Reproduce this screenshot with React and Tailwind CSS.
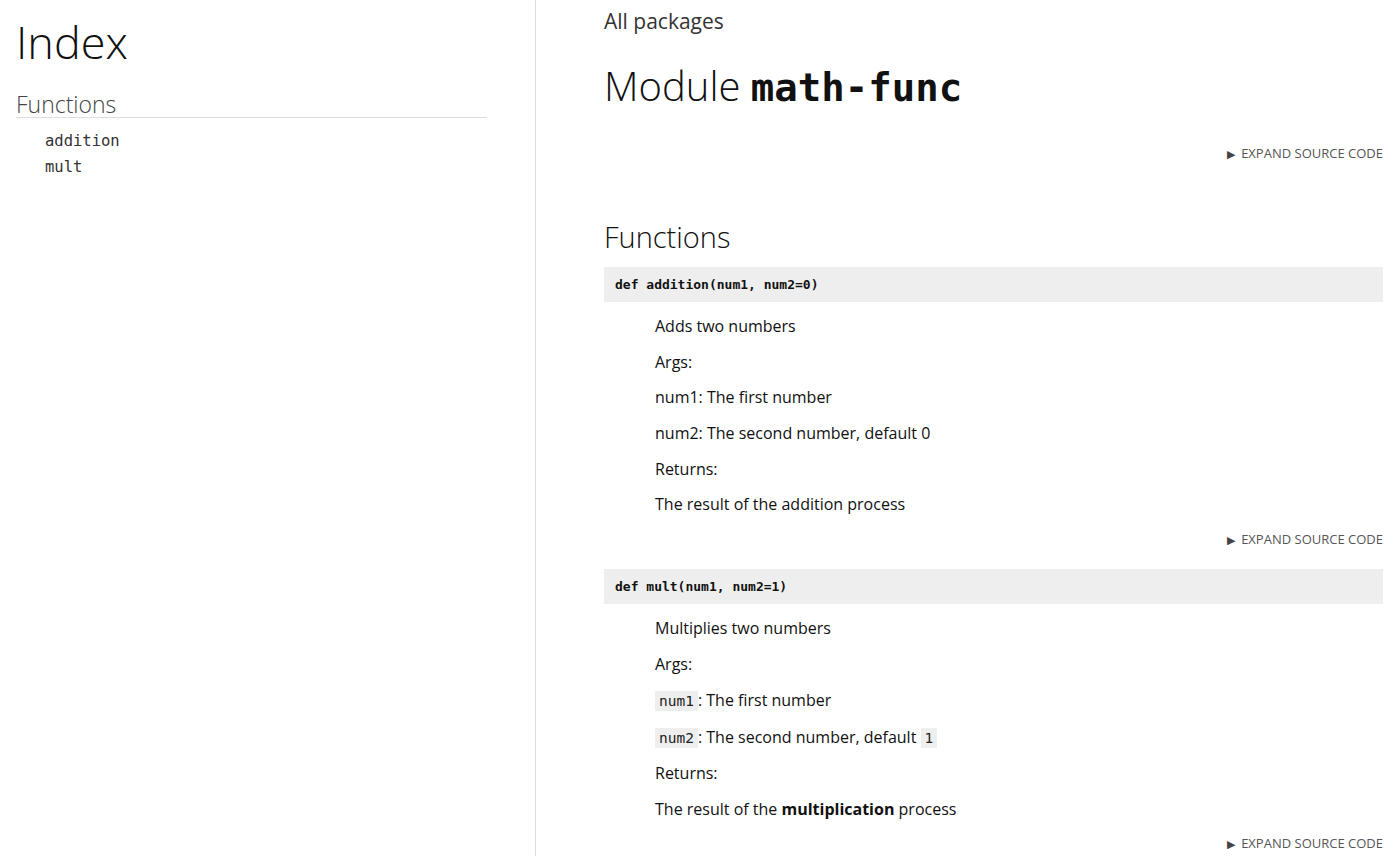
import React from "react";

const sans = "font-['Open_Sans','Noto_Sans',sans-serif]";
const mono = "font-['DejaVu_Sans_Mono','Liberation_Mono',monospace]";

function Expand() {
  return (
    <div className="flex justify-end h-[18px] items-center">
      <span className="flex items-center gap-[6px] text-[13px] text-[#555] uppercase leading-none">
        <span className="text-[11px] text-[#444]">▶</span>
        Expand source code
      </span>
    </div>
  );
}

function Code({ children }) {
  return (
    <code className={`${mono} text-[14.5px] bg-[#eee] px-[4px] py-[2px] text-[#222]`}>{children}</code>
  );
}

function Func({ sig, lines }) {
  return (
    <div>
      <div className="bg-[#eee] h-[35px] flex items-center px-[11px]">
        <span className={`${mono} font-bold text-[13px] text-[#111]`}>{sig}</span>
      </div>
      <div className="pl-[51px] pt-[12px] flex flex-col gap-[11.7px] text-[16px] leading-[24px] text-[#111]">
        {lines.map((l, i) => (
          <p key={i}>{l}</p>
        ))}
      </div>
      <div className="mt-[14px]">
        <Expand />
      </div>
    </div>
  );
}

export default function App() {
  return (
    <div className={`${sans} flex min-h-[856px] bg-white text-[#111]`}>
      <nav className="w-[536px] shrink-0 border-r border-[#ddd] pl-[16px] pr-[48px] pt-[12px]">
        <h1 className="text-[45px] font-light leading-[60px] text-[#111]">Index</h1>
        <h3 className="mt-[20px] text-[23px] font-light leading-[24px] text-[#444] border-b border-[#ddd] pb-[1px]">Functions</h3>
        <ul className={`${mono} text-[15.5px] text-[#333] pl-[29px] pt-[10px] leading-[26px]`}>
          <li>addition</li>
          <li>mult</li>
        </ul>
      </nav>
      <main className="flex-1 pl-[68px] pr-[17px] pt-[7px]">
        <div className="text-[21px] leading-[28px] text-[#333]">All packages</div>
        <h1 className="mt-[23px] text-[40px] font-light leading-[56px] text-[#111]">
          Module <span className={`${mono} font-bold text-[39px] text-[#111]`}>math-func</span>
        </h1>
        <div className="mt-[28px]">
          <Expand />
        </div>
        <h2 className="mt-[56px] text-[29px] font-light leading-[38px] text-[#111]">Functions</h2>
        <div className="mt-[11px] flex flex-col gap-[21px]">
          <Func
            sig="def addition(num1, num2=0)"
            lines={[
              "Adds two numbers",
              "Args:",
              "num1: The first number",
              "num2: The second number, default 0",
              "Returns:",
              "The result of the addition process",
            ]}
          />
          <Func
            sig="def mult(num1, num2=1)"
            lines={[
              "Multiplies two numbers",
              "Args:",
              <>
                <Code>num1</Code>: The first number
              </>,
              <>
                <Code>num2</Code>: The second number, default <Code>1</Code>
              </>,
              "Returns:",
              <>
                The result of the <strong className="font-bold">multiplication</strong> process
              </>,
            ]}
          />
        </div>
      </main>
    </div>
  );
}
